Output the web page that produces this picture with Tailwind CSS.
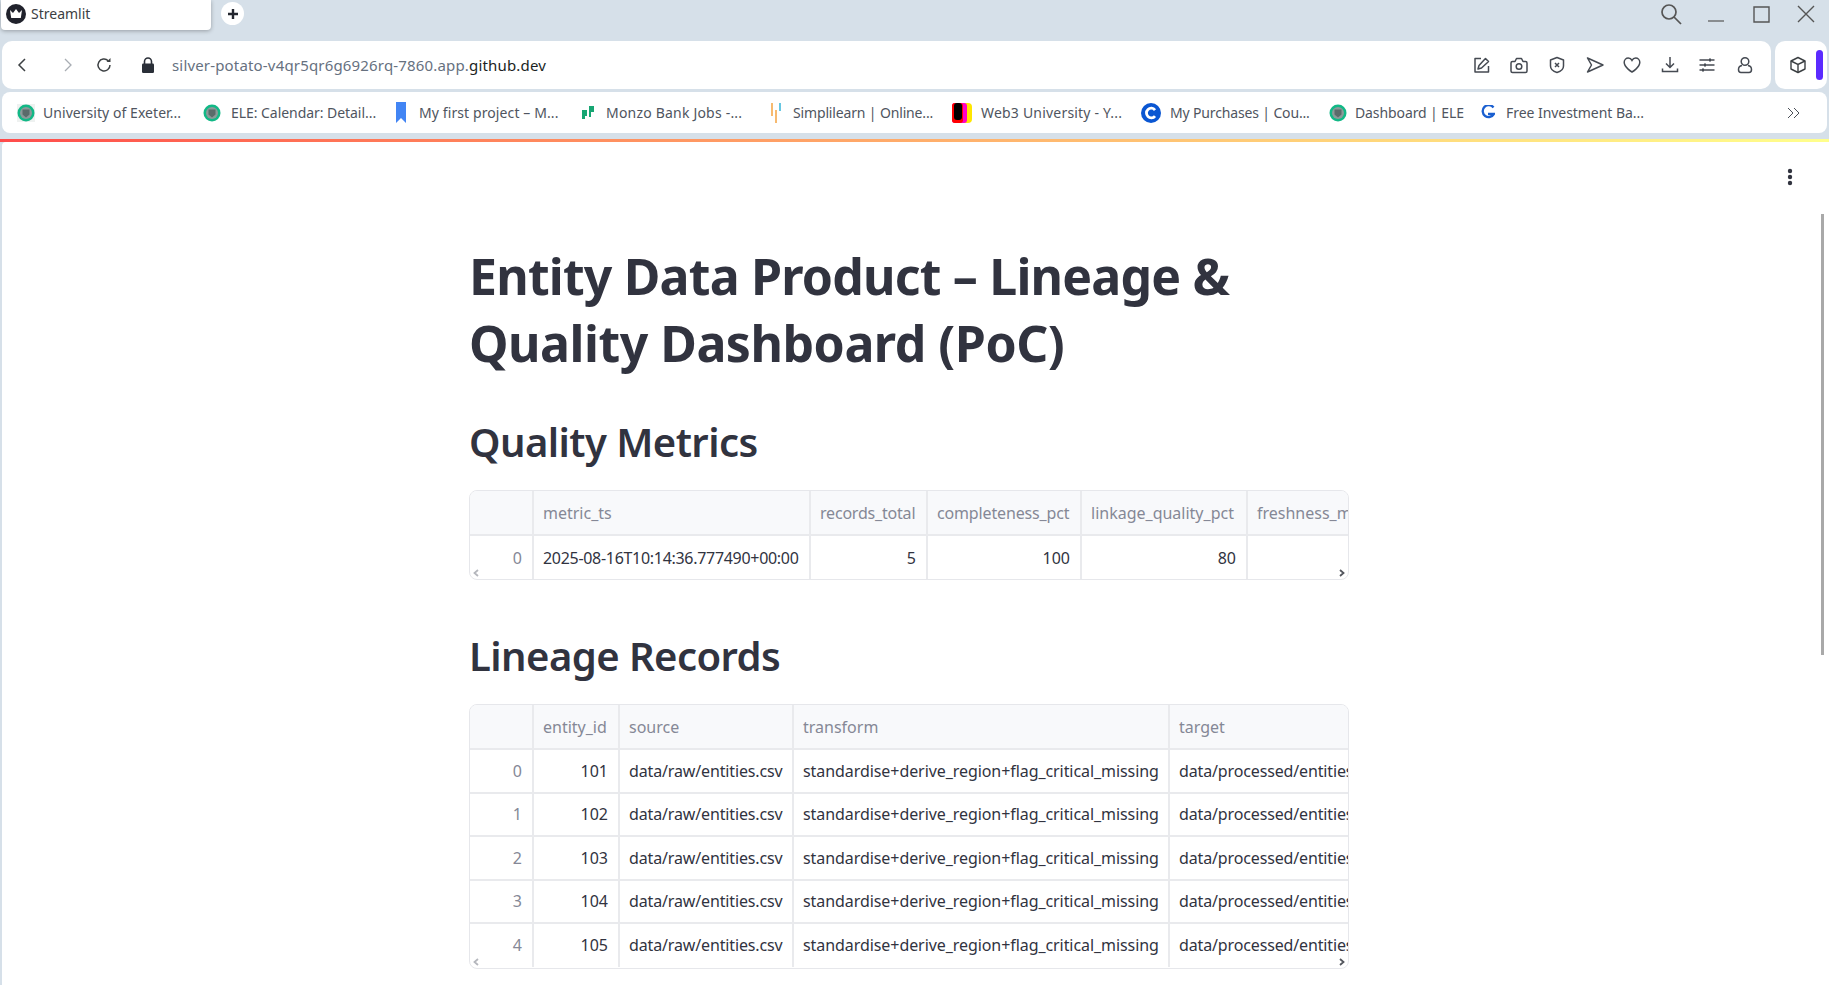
<!DOCTYPE html>
<html>
<head>
<meta charset="utf-8">
<script src="https://cdn.jsdelivr.net/npm/@tailwindcss/browser@4"></script>
</head>
<body class="m-0 h-[985px] w-[1829px] overflow-hidden bg-[#d6e0e9] font-['Noto_Sans',sans-serif]">
<div class="relative flex h-[41px] items-start">
  <div class="ml-[1px] flex h-[30px] w-[210px] items-center gap-[5px] rounded-b-[4px] bg-white pb-[3px] pl-[5px] text-[14px] text-[#3c4043] shadow-[0_1px_4px_rgba(0,0,0,0.3)]">
    <svg width="20" height="20" viewBox="0 0 20 20"><circle cx="10" cy="10" r="10" fill="#20222c"/><path d="M4 6l3 3 3-4 3 4 3-3-1.2 8H5.2z" fill="#fff"/></svg>
    <span>Streamlit</span>
  </div>
  <div class="ml-[10px] mt-[2px] flex h-[23px] w-[23px] items-center justify-center rounded-full bg-white">
    <svg width="12" height="12" viewBox="0 0 12 12"><path d="M6 1v10M1 6h10" stroke="#23262e" stroke-width="2.4"/></svg>
  </div>
  <div class="ml-auto flex h-[28px] items-center pr-[13px]">
    <svg width="24" height="24" viewBox="0 0 24 24" fill="none" stroke="#555" stroke-width="1.7"><circle cx="10" cy="10" r="7"/><path d="M15 15l7 7"/></svg>
    <svg class="ml-[23px]" width="20" height="20" viewBox="0 0 20 20" stroke="#555" stroke-width="1.2"><path d="M2 17h16"/></svg>
    <svg class="ml-[25px]" width="20" height="20" viewBox="0 0 20 20" fill="none" stroke="#555" stroke-width="1.4"><path d="M3 3h15v15H3z"/></svg>
    <svg class="ml-[25px]" width="20" height="20" viewBox="0 0 20 20" fill="none" stroke="#555" stroke-width="1.4"><path d="M2 2l16 16M18 2L2 18"/></svg>
  </div>
</div>

<div class="flex h-[48px] gap-[4px] pl-[2px] pr-[2px]">
  <div class="flex flex-1 items-center rounded-[10px] bg-white">
    <svg class="ml-[12px]" width="16" height="16" viewBox="0 0 16 16" fill="none" stroke="#3c4043" stroke-width="1.5"><path d="M11 2L5 8l6 6"/></svg>
    <svg class="ml-[30px]" width="16" height="16" viewBox="0 0 16 16" fill="none" stroke="#a8adb3" stroke-width="1.3"><path d="M5 2l6 6-6 6"/></svg>
    <svg class="ml-[19px]" width="18" height="18" viewBox="0 0 18 18" fill="none" stroke="#3c4043" stroke-width="1.5"><path d="M15 9a6 6 0 1 1-1.8-4.3"/><path d="M15.500 2v4h-4" fill="#3c4043" stroke="none"/></svg>
    <svg class="ml-[27px]" width="16" height="18" viewBox="0 0 16 18"><path d="M4.500 8V5.500a3.500 3.500 0 0 1 7 0V8" fill="none" stroke="#2a2f38" stroke-width="1.6"/><rect x="2" y="7.500" width="12" height="9.500" rx="1.200" fill="#2a2f38"/></svg>
    <div class="ml-[16px] text-[15px] tracking-[0.17px] text-[#66717f]">silver-potato-v4qr5qr6g6926rq-7860.app.<span class="text-[#1b1f24]">github.dev</span></div>
    <div class="ml-auto mr-[17px] flex items-center gap-[19.600px]">
      <svg width="18" height="18" viewBox="0 0 18 18" fill="none" stroke="#454a52" stroke-width="1.500"><path d="M8 2.500H2v13.500h13.500V10" stroke-linejoin="round"/><path d="M5 13l1-3.500 5.500-6 1-1 3 3-1 1-6 5.500z" stroke-linejoin="round"/></svg>
      <svg width="18" height="18" viewBox="0 0 18 18" fill="none" stroke="#454a52" stroke-width="1.500"><path d="M2.500 5.500h2.500l1.500-3h5l1.500 3h2.500a1.500 1.500 0 0 1 1.500 1.500v8a1.500 1.500 0 0 1-1.500 1.500h-13a1.500 1.500 0 0 1-1.500-1.500v-8a1.500 1.500 0 0 1 1.500-1.500z" stroke-linejoin="round"/><circle cx="9" cy="10.500" r="2.800"/></svg>
      <svg width="18" height="18" viewBox="0 0 18 18" fill="none" stroke="#454a52" stroke-width="1.500"><path d="M9 1.500l6.500 2.500v6c0 3-3 5.500-6.500 6.500-3.500-1-6.500-3.500-6.500-6.500V4z" stroke-linejoin="round"/><path d="M7 7l4 4M11 7l-4 4"/></svg>
      <svg width="18" height="18" viewBox="0 0 18 18" fill="none" stroke="#454a52" stroke-width="1.500"><path d="M1.500 2L17 9 1.500 16 5.500 9z" stroke-linejoin="round"/></svg>
      <svg width="18" height="18" viewBox="0 0 18 18" fill="none" stroke="#454a52" stroke-width="1.500"><path d="M9 16S1.200 11.500 1.200 6.300C1.200 3.800 3.200 2 5.300 2 7 2 8.300 3 9 4.300 9.700 3 11 2 12.700 2c2.100 0 4.100 1.800 4.100 4.300C16.800 11.500 9 16 9 16z"/></svg>
      <svg width="18" height="18" viewBox="0 0 18 18" fill="none" stroke="#454a52" stroke-width="1.500"><path d="M9 1v10M5 7.500L9 11.500l4-4"/><path d="M1.500 12.500v3h15v-3"/></svg>
      <svg width="18" height="18" viewBox="0 0 18 18" fill="none" stroke="#454a52" stroke-width="1.500"><path d="M1.500 4h15M1.500 9h15M1.500 14h15"/><path d="M12 2.500v3M7 7.500v3M5 12.500v3" stroke-width="2"/></svg>
      <svg width="18" height="18" viewBox="0 0 18 18" fill="none" stroke="#454a52" stroke-width="1.500"><circle cx="9" cy="5.500" r="3.800"/><path d="M6 9.500C3 10 2.500 12 2.500 13.500c0 1.800 1 3 2.500 3h8c1.500 0 2.500-1.200 2.500-3 0-1.500-.5-3.500-3.500-4"/></svg>
    </div>
  </div>
  <div class="flex w-[52px] items-center rounded-[10px] bg-white pl-[14px]">
    <svg width="18" height="18" viewBox="0 0 18 18" fill="none" stroke="#3c4043" stroke-width="1.400"><path d="M9 1.500l7 3.500v8l-7 3.500L2 13V5z" stroke-linejoin="round"/><path d="M2 5l7 3.500L16 5M9 8.500v8"/></svg>
    <div class="ml-[9px] h-[30px] w-[7px] rounded-full bg-[#5b2bff]"></div>
  </div>
</div>

<div class="mx-[2px] mt-[3px] flex h-[41px] items-center rounded-[8px] bg-white pl-[15px] text-[14px] text-[#4f5560]">
  <div class="flex w-[186px] items-center gap-[8px]">
    <svg width="18" height="18" viewBox="0 0 18 18"><rect width="18" height="18" fill="#eef1f0"/><circle cx="9" cy="9" r="8.500" fill="#12b886"/><circle cx="9" cy="9" r="6" fill="#8b9a99"/><path d="M5.500 5.500h7v5l-3.500 3-3.500-3z" fill="#5a6b6a"/></svg><span class="tracking-[0.05px]">University of Exeter...</span>
  </div>
  <div class="flex w-[189px] items-center gap-[10px]">
    <svg width="18" height="18" viewBox="0 0 18 18"><circle cx="9" cy="9" r="8.500" fill="#12b886"/><circle cx="9" cy="9" r="6" fill="#8b9a99"/><path d="M5.500 5.500h7v5l-3.500 3-3.500-3z" fill="#5a6b6a"/></svg><span class="tracking-[-0.05px]">ELE: Calendar: Detail...</span>
  </div>
  <div class="flex w-[187px] items-center gap-[13px] pl-[4px]">
    <svg width="10" height="21" viewBox="0 0 10 21"><path d="M0 0h10v21l-5-5-5 5z" fill="#4285f4"/></svg><span class="tracking-[0.1px]">My first project – M...</span>
  </div>
  <div class="flex w-[188px] items-center gap-[12px] pl-[3px]">
    <svg width="12" height="13" viewBox="0 0 12 13"><path d="M7 0h5v6H9v5H7zM0 4h5v6H3v3H0z" fill="#17a673"/></svg><span class="tracking-[0.2px]">Monzo Bank Jobs -...</span>
  </div>
  <div class="flex w-[186px] items-center gap-[12px] pl-[4px]">
    <svg width="10" height="22" viewBox="0 0 10 22"><path d="M1 1v13" stroke="#f4a340" stroke-width="1.500"/><path d="M5 8v13" stroke="#f4a340" stroke-width="1.500"/><path d="M9 1v8" stroke="#36b5d8" stroke-width="1.500"/></svg><span class="tracking-[-0.15px]">Simplilearn | Online...</span>
  </div>
  <div class="-ml-[1px] flex w-[189px] items-center gap-[9px]">
    <svg width="20" height="20" viewBox="0 0 20 20"><rect width="20" height="20" rx="4" fill="#ffe600"/><rect width="15" height="20" rx="3" fill="#ff00c8"/><rect width="11" height="20" rx="3" fill="#f00"/><rect x="2" width="8" height="17" rx="3" fill="#000"/></svg><span class="tracking-[0.2px]">Web3 University - Y...</span>
  </div>
  <div class="flex w-[188px] items-center gap-[9px]">
    <svg width="20" height="20" viewBox="0 0 20 20"><circle cx="10" cy="10" r="10" fill="#0a56d2"/><path d="M14 7a4.800 4.800 0 1 0 0 6" fill="none" stroke="#fff" stroke-width="2.800"/></svg><span class="tracking-[-0.15px]">My Purchases | Cou...</span>
  </div>
  <div class="flex w-[150px] items-center gap-[8px]">
    <svg width="18" height="18" viewBox="0 0 18 18"><circle cx="9" cy="9" r="8.500" fill="#12b886"/><circle cx="9" cy="9" r="6" fill="#8b9a99"/><path d="M5.500 5.500h7v5l-3.500 3-3.500-3z" fill="#5a6b6a"/></svg><span class="tracking-[-0.1px]">Dashboard | ELE</span>
  </div>
  <div class="flex items-center gap-[11px] pl-[2px]">
    <svg width="14" height="15" viewBox="0 0 14 15" fill="none"><path d="M12.500 2.500A6 6 0 1 0 13 9H7" stroke="#1a5fd0" stroke-width="2.300"/></svg><span class="tracking-[-0.05px]">Free Investment Ba...</span>
  </div>
  <svg class="ml-auto mr-[27px]" width="13" height="12" viewBox="0 0 13 12" fill="none" stroke="#4a4f57" stroke-width="1"><path d="M1 1l5 5-5 5M7 1l5 5-5 5"/></svg>
</div>

<div class="mt-[6px] h-[3px] bg-gradient-to-r from-[#ff4b4b] to-[#ffff8c]"></div>
<div class="relative ml-[2px] h-[843px] overflow-hidden rounded-tl-[4px] bg-white text-[#31333f]">
  <svg class="absolute left-[1785px] top-[26px]" width="6" height="18" viewBox="0 0 6 18" fill="#31333f"><circle cx="3" cy="3" r="2.200"/><circle cx="3" cy="9" r="2.200"/><circle cx="3" cy="15" r="2.200"/></svg>
  <div class="absolute left-[1819px] top-[72px] h-[441px] w-[3px] bg-[#a9a9a9]"></div>

  <div class="ml-[467px] w-[880px] pt-[101px]">
    <h1 class="text-[50px] leading-[66.500px] font-bold tracking-[-0.8px]">Entity Data Product – Lineage &amp;<br><span class="tracking-[-0.48px]">Quality Dashboard (PoC)</span></h1>
    <h2 class="mt-[39px] text-[40px] leading-[54px] font-semibold tracking-[-0.55px]">Quality Metrics</h2>
    <div class="relative mt-[21px] h-[90px] overflow-hidden rounded-[8px] border border-[#e6e7eb]">
      <table class="w-[878px] table-fixed border-collapse text-[16px]">
        <colgroup><col class="w-[63px]"><col class="w-[277px]"><col class="w-[117px]"><col class="w-[154px]"><col class="w-[166px]"><col class="w-[101px]"></colgroup>
        <tbody>
          <tr class="h-[44px] bg-[#f8f9fb] text-[#858896]">
            <td class="border-r-2 border-b-2 border-[#e9eaed]"></td>
            <td class="overflow-hidden border-r-2 border-b-2 border-[#e9eaed] px-[9px] whitespace-nowrap">metric_ts</td>
            <td class="overflow-hidden border-r-2 border-b-2 border-[#e9eaed] px-[9px] tracking-[-0.2px] whitespace-nowrap">records_total</td>
            <td class="overflow-hidden border-r-2 border-b-2 border-[#e9eaed] px-[9px] tracking-[-0.15px] whitespace-nowrap">completeness_pct</td>
            <td class="overflow-hidden border-r-2 border-b-2 border-[#e9eaed] px-[9px] whitespace-nowrap">linkage_quality_pct</td>
            <td class="overflow-hidden border-b-2 border-[#e9eaed] pl-[9px] whitespace-nowrap">freshness_minutes</td>
          </tr>
          <tr class="h-[44px]">
            <td class="border-r-2 border-[#e9eaed] px-[10px] text-right text-[#858896]">0</td>
            <td class="overflow-hidden border-r-2 border-[#e9eaed] px-[9px] tracking-[-0.3px] whitespace-nowrap">2025-08-16T10:14:36.777490+00:00</td>
            <td class="border-r-2 border-[#e9eaed] px-[10px] text-right">5</td>
            <td class="border-r-2 border-[#e9eaed] px-[10px] text-right">100</td>
            <td class="border-r-2 border-[#e9eaed] px-[10px] text-right">80</td>
            <td></td>
          </tr>
        </tbody>
      </table>
      <svg class="absolute bottom-[2px] left-[2px]" width="8" height="8" viewBox="0 0 8 8" fill="none" stroke="#b5b7bd" stroke-width="1.800"><path d="M6 1L2.500 4 6 7"/></svg>
      <svg class="absolute right-[2px] bottom-[2px]" width="8" height="8" viewBox="0 0 8 8" fill="none" stroke="#55585f" stroke-width="1.800"><path d="M2 1l3.500 3L2 7"/></svg>
    </div>
    <h2 class="mt-[49px] text-[40px] leading-[54px] font-semibold tracking-[-0.55px]">Lineage Records</h2>
    <div class="relative mt-[21px] h-[265px] overflow-hidden rounded-[8px] border border-[#e6e7eb]">
      <table class="w-[878px] table-fixed border-collapse text-[16px]">
        <colgroup><col class="w-[63px]"><col class="w-[86px]"><col class="w-[174px]"><col class="w-[376px]"><col class="w-[179px]"></colgroup>
        <tbody>
          <tr class="h-[44px] bg-[#f8f9fb] text-[#858896]">
            <td class="border-r-2 border-b-2 border-[#e9eaed]"></td>
            <td class="border-r-2 border-b-2 border-[#e9eaed] px-[9px]">entity_id</td>
            <td class="border-r-2 border-b-2 border-[#e9eaed] px-[9px]">source</td>
            <td class="border-r-2 border-b-2 border-[#e9eaed] px-[9px]">transform</td>
            <td class="border-b-2 border-[#e9eaed] px-[9px]">target</td>
          </tr>
          <tr class="h-[43.500px]">
            <td class="border-r-2 border-b-2 border-[#e9eaed] px-[10px] text-right text-[#858896]">0</td>
            <td class="border-r-2 border-b-2 border-[#e9eaed] px-[10px] text-right">101</td>
            <td class="overflow-hidden border-r-2 border-b-2 border-[#e9eaed] px-[9px] tracking-[-0.14px] whitespace-nowrap">data/raw/entities.csv</td>
            <td class="overflow-hidden border-r-2 border-b-2 border-[#e9eaed] px-[9px] tracking-[-0.07px] whitespace-nowrap">standardise+derive_region+flag_critical_missing</td>
            <td class="overflow-hidden border-b-2 border-[#e9eaed] pl-[9px] tracking-[-0.14px] whitespace-nowrap">data/processed/entities.csv</td>
          </tr>
          <tr class="h-[43.500px]">
            <td class="border-r-2 border-b-2 border-[#e9eaed] px-[10px] text-right text-[#858896]">1</td>
            <td class="border-r-2 border-b-2 border-[#e9eaed] px-[10px] text-right">102</td>
            <td class="overflow-hidden border-r-2 border-b-2 border-[#e9eaed] px-[9px] tracking-[-0.14px] whitespace-nowrap">data/raw/entities.csv</td>
            <td class="overflow-hidden border-r-2 border-b-2 border-[#e9eaed] px-[9px] tracking-[-0.07px] whitespace-nowrap">standardise+derive_region+flag_critical_missing</td>
            <td class="overflow-hidden border-b-2 border-[#e9eaed] pl-[9px] tracking-[-0.14px] whitespace-nowrap">data/processed/entities.csv</td>
          </tr>
          <tr class="h-[43.500px]">
            <td class="border-r-2 border-b-2 border-[#e9eaed] px-[10px] text-right text-[#858896]">2</td>
            <td class="border-r-2 border-b-2 border-[#e9eaed] px-[10px] text-right">103</td>
            <td class="overflow-hidden border-r-2 border-b-2 border-[#e9eaed] px-[9px] tracking-[-0.14px] whitespace-nowrap">data/raw/entities.csv</td>
            <td class="overflow-hidden border-r-2 border-b-2 border-[#e9eaed] px-[9px] tracking-[-0.07px] whitespace-nowrap">standardise+derive_region+flag_critical_missing</td>
            <td class="overflow-hidden border-b-2 border-[#e9eaed] pl-[9px] tracking-[-0.14px] whitespace-nowrap">data/processed/entities.csv</td>
          </tr>
          <tr class="h-[43.500px]">
            <td class="border-r-2 border-b-2 border-[#e9eaed] px-[10px] text-right text-[#858896]">3</td>
            <td class="border-r-2 border-b-2 border-[#e9eaed] px-[10px] text-right">104</td>
            <td class="overflow-hidden border-r-2 border-b-2 border-[#e9eaed] px-[9px] tracking-[-0.14px] whitespace-nowrap">data/raw/entities.csv</td>
            <td class="overflow-hidden border-r-2 border-b-2 border-[#e9eaed] px-[9px] tracking-[-0.07px] whitespace-nowrap">standardise+derive_region+flag_critical_missing</td>
            <td class="overflow-hidden border-b-2 border-[#e9eaed] pl-[9px] tracking-[-0.14px] whitespace-nowrap">data/processed/entities.csv</td>
          </tr>
          <tr class="h-[43.500px]">
            <td class="border-r-2 border-[#e9eaed] px-[10px] text-right text-[#858896]">4</td>
            <td class="border-r-2 border-[#e9eaed] px-[10px] text-right">105</td>
            <td class="overflow-hidden border-r-2 border-[#e9eaed] px-[9px] tracking-[-0.14px] whitespace-nowrap">data/raw/entities.csv</td>
            <td class="overflow-hidden border-r-2 border-[#e9eaed] px-[9px] tracking-[-0.07px] whitespace-nowrap">standardise+derive_region+flag_critical_missing</td>
            <td class="overflow-hidden pl-[9px] tracking-[-0.14px] whitespace-nowrap">data/processed/entities.csv</td>
          </tr>
        </tbody>
      </table>
      <svg class="absolute bottom-[2px] left-[2px]" width="8" height="8" viewBox="0 0 8 8" fill="none" stroke="#b5b7bd" stroke-width="1.800"><path d="M6 1L2.500 4 6 7"/></svg>
      <svg class="absolute right-[2px] bottom-[2px]" width="8" height="8" viewBox="0 0 8 8" fill="none" stroke="#55585f" stroke-width="1.800"><path d="M2 1l3.500 3L2 7"/></svg>
    </div>
  </div>
</div>
</body>
</html>
